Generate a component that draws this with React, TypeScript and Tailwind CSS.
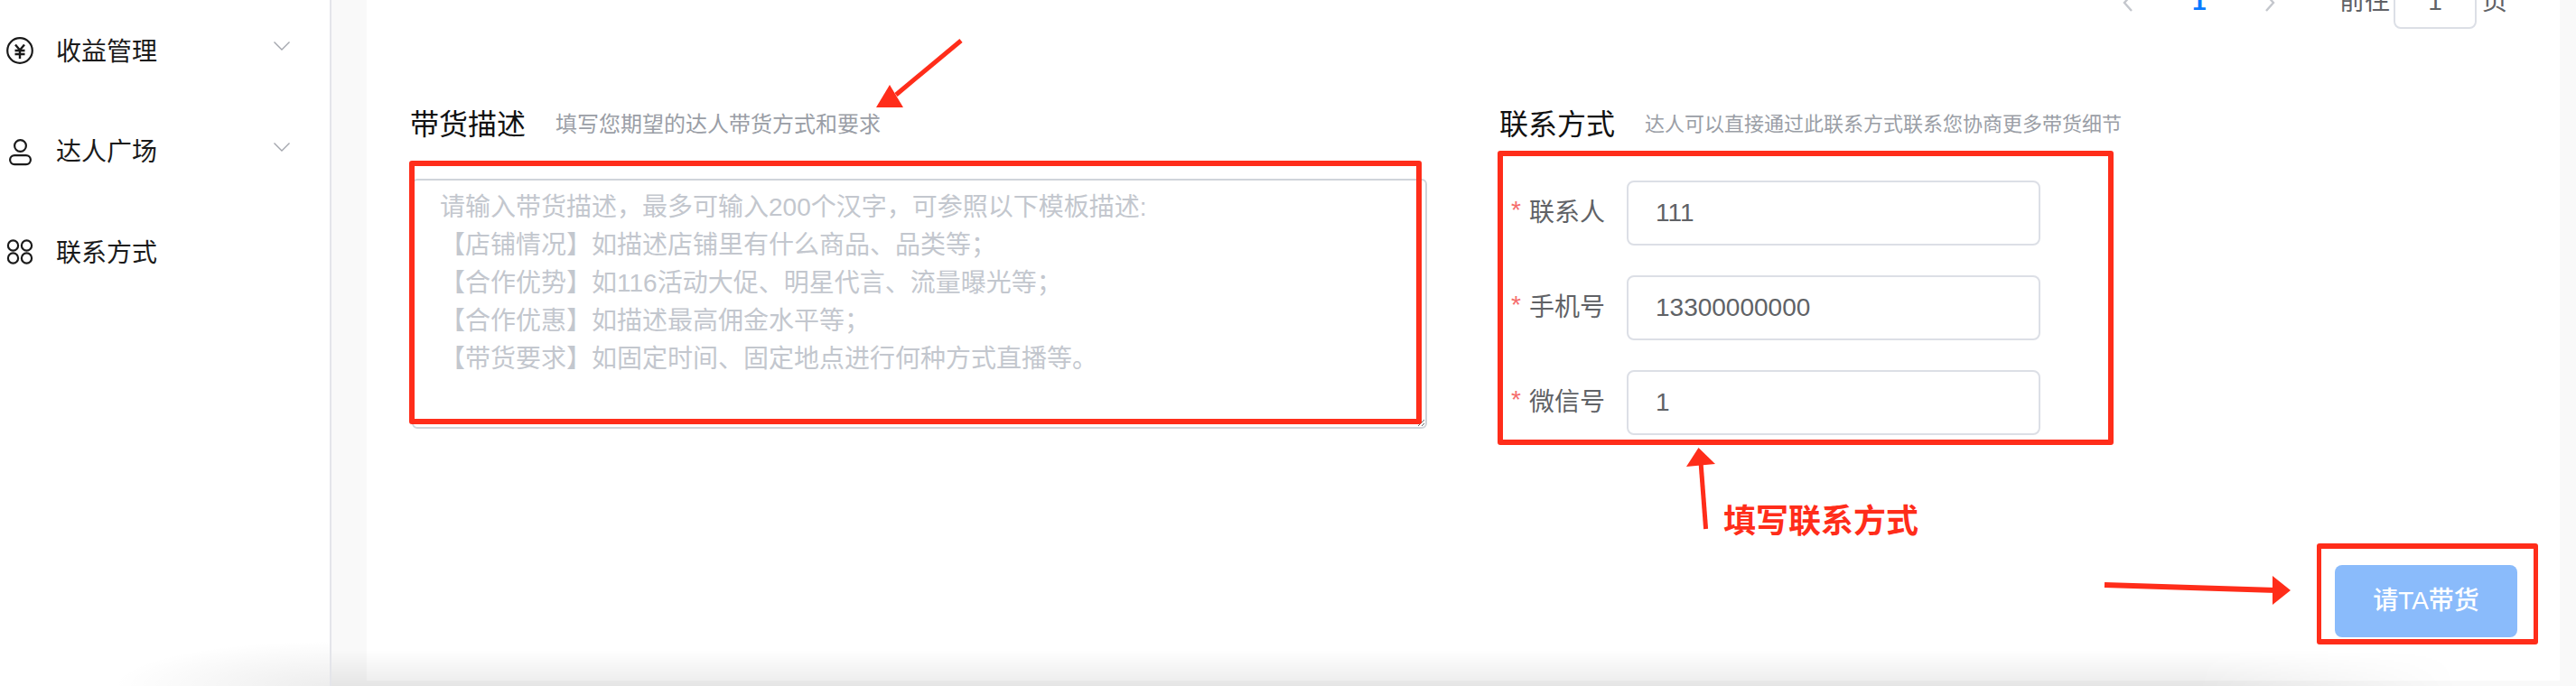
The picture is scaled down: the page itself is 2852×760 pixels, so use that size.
import React from "react";

const FONT = "font-['Liberation_Sans','Noto_Sans_CJK_SC',sans-serif]";

function YenIcon() {
  return (
    <svg width="32" height="32" viewBox="0 0 32 32" fill="none" stroke="#1a1a1a" strokeWidth="2.2">
      <circle cx="16" cy="16" r="13.8" />
      <path d="M11 9.5l5 6 5-6M10.5 16h11M10.5 20h11M16 15.5V25" strokeWidth="2.4" />
    </svg>
  );
}

function PersonIcon() {
  return (
    <svg width="32" height="32" viewBox="0 0 32 32" fill="none" stroke="#1a1a1a" strokeWidth="2.2">
      <circle cx="16.5" cy="9.5" r="6.4" />
      <rect x="5.1" y="20.1" width="22.8" height="10" rx="5" />
    </svg>
  );
}

function AppsIcon() {
  return (
    <svg width="32" height="32" viewBox="0 0 32 32" fill="none" stroke="#1a1a1a" strokeWidth="2.2">
      <circle cx="8.5" cy="9" r="5.6" />
      <circle cx="23.5" cy="9" r="5.6" />
      <circle cx="8.5" cy="23" r="5.6" />
      <circle cx="23.5" cy="23" r="5.6" />
    </svg>
  );
}

function Chevron() {
  return (
    <svg width="18" height="10" viewBox="0 0 18 10" fill="none" stroke="#a3a6ad" strokeWidth="1.4" className="-mt-[10px]">
      <path d="M0.5 0.5L9 9L17.5 0.5" />
    </svg>
  );
}

const MENU = [
  { label: "收益管理", icon: <YenIcon />, arrow: true },
  { label: "达人广场", icon: <PersonIcon />, arrow: true },
  { label: "联系方式", icon: <AppsIcon />, arrow: false },
];

function Sidebar() {
  return (
    <aside className="w-[367px] shrink-0 border-r-2 border-[#e4e5ea] bg-white pt-[28px]">
      {MENU.map((item) => (
        <div key={item.label} className="flex h-[56px] mb-[55.5px] items-center pl-[6px] pr-[44px]">
          <span className="w-[56px] shrink-0">{item.icon}</span>
          <span className="flex-1 pt-[3px] text-[28px] text-[#1a1a1a]">{item.label}</span>
          {item.arrow && <Chevron />}
        </div>
      ))}
    </aside>
  );
}

function Pagination() {
  return (
    <div className="flex h-[64px] -mt-[32px] items-center justify-end pr-[58px] text-[28px] text-[#606266]">
      <svg width="12" height="26" viewBox="0 0 12 26" fill="none" stroke="#c4c7cd" strokeWidth="2.4">
        <path d="M10 7L2 16L10 25" />
      </svg>
      <span className="ml-[65px] w-[16px] pt-[3px] font-bold text-[#0a7aff]">1</span>
      <svg width="12" height="26" viewBox="0 0 12 26" fill="none" stroke="#c4c7cd" strokeWidth="2.4" className="ml-[64px]">
        <path d="M2 7L10 16L2 25" />
      </svg>
      <span className="ml-[71px] pt-[3px]">前往</span>
      <span className="ml-[4px] flex h-[64px] w-[92px] items-center justify-center rounded-[8px] border-2 border-[#dcdfe6] pt-[3px]">1</span>
      <span className="ml-[6px] pt-[3px]">页</span>
    </div>
  );
}

function SectionTitle({ title, hint, titleClass, hintClass }: { title: string; hint: string; titleClass?: string; hintClass: string }) {
  return (
    <div className="flex h-[40px] items-center whitespace-nowrap">
      <span className={`${titleClass ?? ""} text-[32px] leading-[40px] text-[#111]`}>{title}</span>
      <span className={`${hintClass} leading-[40px] text-[#9a9ea6]`}>{hint}</span>
    </div>
  );
}

const PLACEHOLDER = `请输入带货描述，最多可输入200个汉字，可参照以下模板描述:
【店铺情况】如描述店铺里有什么商品、品类等；
【合作优势】如116活动大促、明星代言、流量曝光等；
【合作优惠】如描述最高佣金水平等；
【带货要求】如固定时间、固定地点进行何种方式直播等。`;

function ContactRow({ label, value }: { label: string; value: string }) {
  return (
    <div className="flex h-[72px] items-center">
      <label className="flex w-[141px] shrink-0 items-center pl-[13px] text-[28px] text-[#606266]">
        <span className="w-[20px] -mt-[6px] text-[#f56c6c]">*</span>
        {label}
      </label>
      <input
        readOnly
        value={value}
        className="h-[72px] w-[458px] rounded-[8px] border-2 border-[#dcdfe6] bg-white px-[30px] text-[28px] text-[#606266] outline-none"
      />
    </div>
  );
}

function Annotations() {
  return (
    <>
      <div className="absolute left-[453px] top-[178px] h-[292px] w-[1121px] rounded-[3px] border-[6px] border-[#ff2d1a]" />
      <div className="absolute left-[1658px] top-[167px] h-[326px] w-[682px] rounded-[3px] border-[6px] border-[#ff2d1a]" />
      <div className="absolute left-[2565px] top-[602px] h-[112px] w-[245px] rounded-[3px] border-x-[5px] border-y-[6px] border-[#ff2d1a]" />
      <span className="absolute left-[1908px] top-[556px] text-[36px] font-bold leading-[44px] text-[#ff2d1a]">填写联系方式</span>
      <svg className="absolute left-0 top-0 pointer-events-none" width="2852" height="760" fill="#ff2d1a" stroke="none">
        <path d="M1064 45L992 105" stroke="#ff2d1a" strokeWidth="5" fill="none" />
        <polygon points="970,119 985,94 1000,119" />
        <path d="M1888.6 586L1883 512" stroke="#ff2d1a" strokeWidth="5" fill="none" />
        <polygon points="1880.5,496 1867,517 1899,514" />
        <path d="M2330 648L2520 654" stroke="#ff2d1a" strokeWidth="6" fill="none" />
        <polygon points="2536,654 2516,638 2516,670" />
      </svg>
    </>
  );
}

export default function App() {
  return (
    <div className={`relative flex h-[760px] w-[2852px] overflow-hidden bg-[#f9f9f9] ${FONT}`}>
      <Sidebar />
      <main className="ml-[39px] mr-[18px] h-[754px] flex-1 overflow-hidden bg-white">
        <Pagination />
        <div className="mt-[86px] flex pl-[50px]">
          <div className="w-[1124px]">
            <SectionTitle title="带货描述" hint="填写您期望的达人带货方式和要求" titleClass="-ml-[2px]" hintClass="ml-[33px] text-[24px]" />
            <textarea
              readOnly
              placeholder={PLACEHOLDER}
              className="mt-[40px] block h-[277px] w-[1124px] rounded-[6px] border-2 border-[#d0d4da] px-[29px] pt-[9px] text-[28px] leading-[42px] outline-none placeholder:text-[#c3c7ce]"
            />
          </div>
          <div className="ml-[80px] w-[1000px]">
            <SectionTitle title="联系方式" hint="达人可以直接通过此联系方式联系您协商更多带货细节" hintClass="ml-[33px] text-[22px]" />
            <div className="mt-[42px] flex flex-col gap-[33px]">
              <ContactRow label="联系人" value="111" />
              <ContactRow label="手机号" value="13300000000" />
              <ContactRow label="微信号" value="1" />
            </div>
          </div>
        </div>
        <div className="mt-[144px] flex justify-end pr-[47px]">
          <button className="h-[80px] w-[202px] rounded-[8px] bg-[#8abbfb] text-[28px] font-medium text-white">请TA带货</button>
        </div>
      </main>
      <Annotations />
      <div className="pointer-events-none absolute bottom-0 left-[367px] right-0 h-[40px] bg-gradient-to-t from-[#00000014] to-transparent [mask-image:linear-gradient(to_left,transparent_130px,black_420px)]" />
      <div className="pointer-events-none absolute bottom-0 left-0 h-[50px] w-[365px] bg-[radial-gradient(ellipse_240px_50px_at_100%_100%,#00000012,transparent)]" />
    </div>
  );
}
